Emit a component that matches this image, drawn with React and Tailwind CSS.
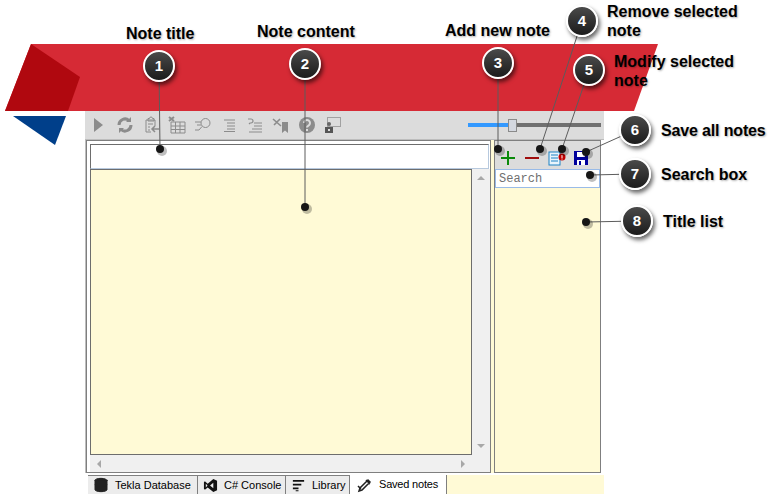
import { Database } from "lucide-react";

// callouts: number, circle centre, line end
const callouts = [
  { n: 1, x: 159, y: 66, tx: 160, ty: 149 },
  { n: 2, x: 305, y: 64, tx: 305, ty: 207 },
  { n: 3, x: 498, y: 63, tx: 498, ty: 149 },
  { n: 4, x: 582, y: 21, tx: 540, ty: 149 },
  { n: 5, x: 589, y: 70, tx: 562, ty: 149 },
  { n: 6, x: 635, y: 130, tx: 586, ty: 152 },
  { n: 7, x: 635, y: 174, tx: 590, ty: 175 },
  { n: 8, x: 637, y: 221, tx: 586, ty: 222 },
];

const labelClass = "absolute font-bold text-[16px] leading-[19px] text-black [text-shadow:1px_1px_2px_rgba(0,0,0,0.3)]";

const Banner = () => (
  <svg className="absolute left-0 top-0" width="773" height="150">
    <polygon points="31,44 658,44 634,111 5,111" fill="#d62a35" />
    <polygon points="31,44 80,77 68,111 5,111" fill="#b0080f" />
    <polygon points="13,116 66,116 55,145" fill="#003f8a" />
  </svg>
);

const GreyIcon = ({ children }) => (
  <div className="w-[26px] flex justify-center">
    <svg width="18" height="18" viewBox="0 0 18 18" fill="none" stroke="#8c8c8c" strokeWidth="1">
      {children}
    </svg>
  </div>
);

const Toolbar = () => (
  <div className="h-[28px] bg-[#dcdcdc] flex items-center pl-[1px] pr-[3px]">
    <GreyIcon><path d="M4 2l9 7-9 7z" fill="#8c8c8c" stroke="none" /></GreyIcon>
    <GreyIcon>
      <path d="M3 9a6 6 0 0 1 10-4.500M15 9a6 6 0 0 1-10 4.500" strokeWidth="3" />
      <path d="M15 1v5h-5zM3 17v-5h5z" fill="#8c8c8c" stroke="none" />
    </GreyIcon>
    <GreyIcon>
      <path d="M9 16H4V4h9v6" />
      <path d="M6 4V2.500h1.500a1.500 1.500 0 0 1 3 0H12V5H6zM6 8h5M6 11h2M6 14h2" />
      <path d="M10 13h7M13 10l-3 3 3 3" strokeWidth="1.500" />
    </GreyIcon>
    <GreyIcon>
      <path d="M3 6h14v11H3zM3 10h14M3 13.500h14M7.500 6v11M12 6v11" />
      <path d="M1 1l5 4M6 1L1 5" strokeWidth="2" />
    </GreyIcon>
    <GreyIcon>
      <circle cx="11.500" cy="7" r="4.500" />
      <path d="M8 10.500L5 14M1 6h6M3 9h4M1 14h4" />
    </GreyIcon>
    <GreyIcon><path d="M4 4h11M7 7h8M7 10h8M7 13h8M4 15.500h11" /></GreyIcon>
    <GreyIcon>
      <path d="M2 3h3a1.500 1.500 0 0 1 0 4H4l-1 1M8 7h8M8 10h8M6 13h10M3 16h13" strokeWidth="1.200" />
    </GreyIcon>
    <GreyIcon>
      <path d="M1 3l8 7M8 3L2 9" strokeWidth="1.600" />
      <path d="M10 6h6v11l-3-2.500-3 2.500z" fill="#8c8c8c" stroke="none" />
    </GreyIcon>
    <GreyIcon>
      <circle cx="9" cy="9" r="8" fill="#8c8c8c" stroke="none" />
      <path d="M6 7a3 3 0 1 1 4.500 2.600C9.500 10.200 9 10.700 9 11.500" stroke="#dcdcdc" strokeWidth="2" />
      <rect x="8" y="13" width="2" height="2" fill="#dcdcdc" stroke="none" />
    </GreyIcon>
    <GreyIcon>
      <rect x="3.500" y="1.500" width="13" height="9" strokeDasharray="1 1" stroke="#666666" />
      <circle cx="5" cy="8" r="2" fill="#666666" stroke="none" />
      <rect x="1" y="11" width="8" height="6" fill="#555555" stroke="none" />
      <rect x="4" y="13" width="2" height="2" fill="#dcdcdc" stroke="none" />
    </GreyIcon>
    {/* zoom slider */}
    <div className="ml-auto w-[133px] h-[4px] flex items-center">
      <div className="w-[40px] h-[4px] bg-[#3399ff]" />
      <div className="w-[9px] h-[13px] bg-[#d4d8e0] border border-[#8a8a8a] shrink-0" />
      <div className="flex-1 h-[4px] bg-[#707070]" />
    </div>
  </div>
);

const NoteEditor = () => (
  <div className="w-[405px] h-[333px] border border-[#7f7f7f] bg-white pt-[3px] pl-[3px] flex flex-col">
    <div className="h-[25px] w-[399px] border border-[#b7c9de] border-t-[#6d6d6d] border-l-[#6d6d6d] bg-white" />
    <div className="flex h-[286px]">
      <div className="w-[382px] bg-[#fffad6] border border-[#6d6d6d]" />
      <div className="w-[18px] bg-[#f0f0f0] flex flex-col items-center justify-between py-[7px]">
        <div className="w-0 h-0 border-x-[4px] border-x-transparent border-b-[4px] border-b-[#a8a8a8]" />
        <div className="w-0 h-0 border-x-[4px] border-x-transparent border-t-[4px] border-t-[#a8a8a8]" />
      </div>
    </div>
    <div className="h-[17px] w-[400px] bg-[#f0f0f0]">
      <div className="w-[382px] h-[17px] flex items-center justify-between px-[7px]">
        <div className="w-0 h-0 border-y-[4px] border-y-transparent border-r-[4px] border-r-[#a8a8a8]" />
        <div className="w-0 h-0 border-y-[4px] border-y-transparent border-l-[4px] border-l-[#a8a8a8]" />
      </div>
    </div>
  </div>
);

const TitlePanel = () => (
  <div className="w-[107px] h-[333px] border border-[#7f7f7f] flex flex-col">
    <div className="h-[28px] bg-[#dcdcdc] flex items-center pl-[5px] pt-[5px]">
      <svg width="16" height="16" viewBox="0 0 16 16">
        <path d="M7 1h2v6h6v2H9v6H7V9H1V7h6z" fill="#0a8a0a" />
      </svg>
      <svg width="16" height="16" viewBox="0 0 16 16" className="ml-[8px]">
        <rect x="1" y="7" width="14" height="2" fill="#a00d0d" />
      </svg>
      <svg width="18" height="16" viewBox="0 0 18 16" className="ml-[8px]">
        <rect x="1" y="2" width="11" height="13" fill="#e8f4fc" stroke="#1c82c4" />
        <path d="M3 5h7M3 8h7M3 11h7" stroke="#1c82c4" />
        <circle cx="14" cy="7" r="3.500" fill="#c00000" />
        <rect x="13.500" y="5" width="1" height="3" fill="#ffffff" />
        <rect x="13.500" y="8.500" width="1" height="1" fill="#ffffff" />
      </svg>
      <svg width="16" height="16" viewBox="0 0 16 16" className="ml-[7px]">
        <path d="M1 1h14v14H1z" fill="#00009c" />
        <rect x="4" y="2" width="8" height="5" fill="#ffffff" />
        <rect x="4" y="10" width="8" height="5" fill="#ffffff" />
        <rect x="6" y="11" width="2" height="4" fill="#00009c" />
      </svg>
    </div>
    <div className="h-[19px] border border-[#99bbe8] bg-white pl-[3px] font-['Liberation_Mono',monospace] text-[12px] leading-[19px] text-[#707070]">
      Search
    </div>
    <div className="flex-1 bg-[#fffad6]" />
  </div>
);

const Tab = ({ w, icon, label, active, gap }) => (
  <div className={`h-[19px] flex items-center border-r border-t border-[#7f7f7f] text-[11px] font-['Liberation_Sans',sans-serif] text-black ${active ? "bg-white border-t-0 pl-[7px] tracking-[-0.2px]" : "bg-[#ececec] pl-[5px]"} ${gap} ${w}`}>
    {icon}
    <span>{label}</span>
  </div>
);

const Tabs = () => (
  <div className="flex h-[19px] mt-[2px] pl-[3px] bg-white">
    <Tab
      w="w-[110px]"
      gap="gap-[6px]"
      label="Tekla Database"
      icon={<Database size={16} color="#222" fill="#222" strokeWidth={1.5} />}
    />
    <Tab
      w="w-[88px]"
      gap="gap-[6px]"
      label="C# Console"
      icon={
        <svg width="15" height="15" viewBox="0 0 16 16" fill="#111">
          <path d="M11 1l4 2v10l-4 2-6-5-3 2.500-1-1V4.500l1-1L5 6zM11 5L7.500 8 11 11zM3 6v4l1.800-2z" />
        </svg>
      }
    />
    <Tab
      w="w-[64px]"
      gap="gap-[6px]"
      label="Library"
      icon={
        <svg width="15" height="15" viewBox="0 0 16 16" fill="#111">
          <path d="M2 2h12v2H2zM2 6h9v2H2zM2 10h6v2H2zM5 13h3v1H5z" />
        </svg>
      }
    />
    <Tab
      w="w-[97px]"
      gap="gap-[6px]"
      active
      label="Saved notes"
      icon={
        <svg width="16" height="16" viewBox="0 0 16 16" fill="none" stroke="#222" strokeWidth="1.5">
          <path d="M2 14l3-1 8-8-2-2-8 8zM9 3l4 4M1 9l3 3" />
        </svg>
      }
    />
    <div className="flex-1 bg-[#fffad6]" />
  </div>
);

const Callouts = () => (
  <>
    <svg className="absolute left-0 top-0" width="773" height="494">
      {callouts.map((c) => (
        <g key={c.n}>
          <line x1={c.x} y1={c.y} x2={c.tx} y2={c.ty} stroke="#5c5c5c" strokeWidth="1" />
          <circle cx={c.tx + 2} cy={c.ty + 2} r="5" fill="#000" opacity="0.25" />
          <circle cx={c.tx} cy={c.ty} r="4" fill="#161616" />
        </g>
      ))}
    </svg>
    {callouts.map((c) => (
      <div
        key={c.n}
        className="absolute w-[32px] h-[32px] -ml-[16px] -mt-[16px] rounded-full border-2 border-white bg-gradient-to-b from-[#4a4a4a] to-[#1c1c1c] shadow-[2px_3px_4px_rgba(0,0,0,0.6)] flex items-center justify-center text-white font-bold text-[15px]"
        style={{ left: c.x, top: c.y }}
      >
        {c.n}
      </div>
    ))}
  </>
);

const Labels = () => (
  <>
    <div className={`${labelClass} left-[126px] top-[24px]`}>Note title</div>
    <div className={`${labelClass} left-[257px] top-[22px]`}>Note content</div>
    <div className={`${labelClass} left-[445px] top-[21px]`}>Add new note</div>
    <div className={`${labelClass} left-[607px] top-[2px]`}>Remove selected<br />note</div>
    <div className={`${labelClass} left-[614px] top-[52px]`}>Modify selected<br />note</div>
    <div className={`${labelClass} left-[661px] top-[121px] tracking-[-0.15px]`}>Save all notes</div>
    <div className={`${labelClass} left-[661px] top-[165px]`}>Search box</div>
    <div className={`${labelClass} left-[663px] top-[212px]`}>Title list</div>
  </>
);

export default function App() {
  return (
    <div className="relative w-[773px] h-[494px] bg-white overflow-hidden font-['Liberation_Sans',sans-serif]">
      <Banner />
      <div className="relative pl-[85px] pt-[111px] w-[604px]">
        <Toolbar />
        <div className="flex border-l border-t border-[#bdbdbd] bg-white">
          <NoteEditor />
          <div className="w-[3px] bg-[#fffad6]" />
          <TitlePanel />
        </div>
        <Tabs />
      </div>
      <Callouts />
      <Labels />
    </div>
  );
}
